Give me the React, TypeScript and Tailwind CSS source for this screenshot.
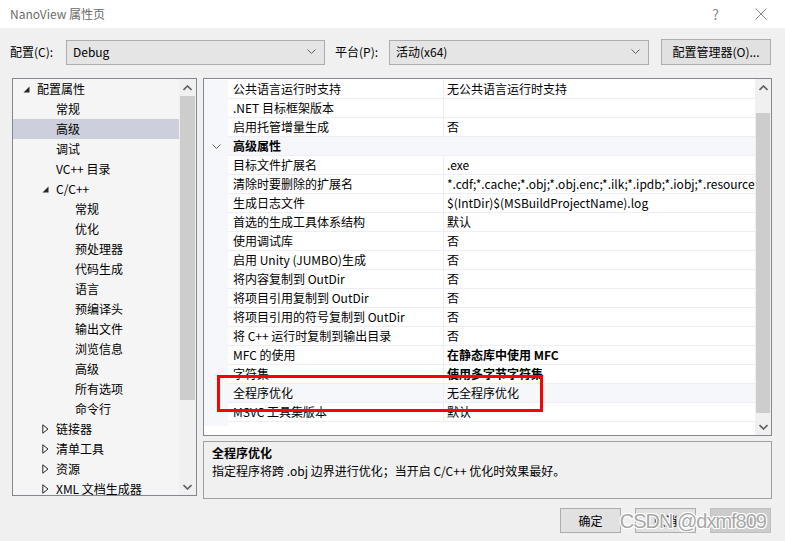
import React from 'react';

const FONT = { fontFamily: '"Noto Sans CJK SC", "Noto Sans", sans-serif' };

type TreeItem = { label: string; level: number; arrow?: 'open' | 'closed'; selected?: boolean };

const treeItems: TreeItem[] = [
  { label: '配置属性', level: 0, arrow: 'open' },
  { label: '常规', level: 1 },
  { label: '高级', level: 1, selected: true },
  { label: '调试', level: 1 },
  { label: 'VC++ 目录', level: 1 },
  { label: 'C/C++', level: 1, arrow: 'open' },
  { label: '常规', level: 2 },
  { label: '优化', level: 2 },
  { label: '预处理器', level: 2 },
  { label: '代码生成', level: 2 },
  { label: '语言', level: 2 },
  { label: '预编译头', level: 2 },
  { label: '输出文件', level: 2 },
  { label: '浏览信息', level: 2 },
  { label: '高级', level: 2 },
  { label: '所有选项', level: 2 },
  { label: '命令行', level: 2 },
  { label: '链接器', level: 1, arrow: 'closed' },
  { label: '清单工具', level: 1, arrow: 'closed' },
  { label: '资源', level: 1, arrow: 'closed' },
  { label: 'XML 文档生成器', level: 1, arrow: 'closed' },
];

type Row = { name: string; value?: string; category?: boolean; bold?: boolean; selected?: boolean };

const rows: Row[] = [
  { name: '公共语言运行时支持', value: '无公共语言运行时支持' },
  { name: '.NET 目标框架版本', value: '' },
  { name: '启用托管增量生成', value: '否' },
  { name: '高级属性', category: true },
  { name: '目标文件扩展名', value: '.exe' },
  { name: '清除时要删除的扩展名', value: '*.cdf;*.cache;*.obj;*.obj.enc;*.ilk;*.ipdb;*.iobj;*.resources;*.tlb;*.tli' },
  { name: '生成日志文件', value: '$(IntDir)$(MSBuildProjectName).log' },
  { name: '首选的生成工具体系结构', value: '默认' },
  { name: '使用调试库', value: '否' },
  { name: '启用 Unity (JUMBO)生成', value: '否' },
  { name: '将内容复制到 OutDir', value: '否' },
  { name: '将项目引用复制到 OutDir', value: '否' },
  { name: '将项目引用的符号复制到 OutDir', value: '否' },
  { name: '将 C++ 运行时复制到输出目录', value: '否' },
  { name: 'MFC 的使用', value: '在静态库中使用 MFC', bold: true },
  { name: '字符集', value: '使用多字节字符集', bold: true },
  { name: '全程序优化', value: '无全程序优化', selected: true },
  { name: 'MSVC 工具集版本', value: '默认' },
];

function Chevron({ className }: { className?: string }) {
  return (
    <svg width="9" height="6" viewBox="0 0 9 6" className={className}>
      <path d="M0.5 0.5 L4.5 4.5 L8.5 0.5" fill="none" stroke="#606060" strokeWidth="1" />
    </svg>
  );
}

function ScrollArrow({ up }: { up?: boolean }) {
  return (
    <svg width="9" height="6" viewBox="0 0 9 6">
      <path
        d={up ? 'M0.5 5 L4.5 1 L8.5 5' : 'M0.5 1 L4.5 5 L8.5 1'}
        fill="none"
        stroke="#606060"
        strokeWidth="1.6"
      />
    </svg>
  );
}

function Dropdown({ value, width }: { value: string; width: string }) {
  return (
    <div className={`${width} h-[25px] flex items-center justify-between pl-[6px] pr-[8px] bg-[#e5e5e5] border border-[#adadad]`}>
      <span className="text-[12px] text-black">{value}</span>
      <Chevron />
    </div>
  );
}

function TreeArrow({ kind }: { kind: 'open' | 'closed' }) {
  if (kind === 'open') {
    return (
      <svg width="7" height="7" viewBox="0 0 7 7">
        <path d="M6.5 0.5 L6.5 6.5 L0.5 6.5 Z" fill="#262626" />
      </svg>
    );
  }
  return (
    <svg width="7" height="10" viewBox="0 0 7 10">
      <path d="M0.8 0.8 L6 5 L0.8 9.2 Z" fill="none" stroke="#262626" strokeWidth="1" />
    </svg>
  );
}

export default function App() {
  return (
    <div className="relative w-[785px] h-[541px] bg-[#f0f0f0] flex flex-col overflow-hidden text-black" style={FONT}>
      {/* title bar */}
      <div className="h-[28px] bg-white flex items-center justify-between pl-[10px] pr-[18px] shrink-0">
        <span className="text-[12px] text-[#6b6b6b]">NanoView 属性页</span>
        <div className="flex items-center gap-[36px] text-[#8a8a8a]">
          <span className="text-[14px]">?</span>
          <svg width="12" height="12" viewBox="0 0 12 12">
            <path d="M0.5 0.5 L11.5 11.5 M11.5 0.5 L0.5 11.5" stroke="#8a8a8a" strokeWidth="1" />
          </svg>
        </div>
      </div>

      {/* config row */}
      <div className="mt-[11px] h-[26px] flex items-center pl-[10px] shrink-0">
        <span className="text-[12px] w-[56px]">配置(C):</span>
        <Dropdown value="Debug" width="w-[259px]" />
        <span className="text-[12px] ml-[10px] w-[54px]">平台(P):</span>
        <Dropdown value="活动(x64)" width="w-[260px]" />
        <div className="ml-[12px] w-[110px] h-[26px] flex items-center justify-center bg-[#e1e1e1] border border-[#adadad] text-[12px]">
          配置管理器(O)...
        </div>
      </div>

      {/* main */}
      <div className="mt-[13px] flex pl-[12px] shrink-0">
        {/* tree */}
        <div className="w-[185px] h-[418px] border border-[#828790] bg-[#f5f5f5] flex">
          <div className="flex-1 flex flex-col">
            {treeItems.map((t, i) => (
              <div
                key={i}
                className={`h-[20px] flex items-center shrink-0 text-[12px] ${t.selected ? 'bg-[#cdd0dc]' : ''}`}
              >
                <div
                  className={`flex items-center justify-end pr-[7px] shrink-0 ${
                    t.level === 0 ? 'w-[24px]' : t.level === 1 ? 'w-[43px]' : 'w-[62px]'
                  }`}
                >
                  {t.arrow && <TreeArrow kind={t.arrow} />}
                </div>
                <span className="whitespace-nowrap">{t.label}</span>
              </div>
            ))}
          </div>
          <div className="w-[17px] flex flex-col bg-[#f0f0f0]">
            <div className="h-[17px] flex items-center justify-center">
              <ScrollArrow up />
            </div>
            <div className="h-[304px] mx-[1px] bg-[#cdcdcd]" />
            <div className="flex-1" />
            <div className="h-[17px] flex items-center justify-center">
              <ScrollArrow />
            </div>
          </div>
        </div>

        {/* right side */}
        <div className="ml-[6px] w-[569px] flex flex-col">
          <div className="relative h-[358px] border border-[#828790] bg-white flex">
            <div className="flex-1 min-w-0 flex flex-col pt-[1px]">
              {rows.map((r, i) => (
                <div key={i} className="h-[19px] flex shrink-0 text-[12px]">
                  <div className="w-[24px] bg-[#f5f7fa] flex items-center justify-center shrink-0">
                    {r.category && <Chevron />}
                  </div>
                  {r.category ? (
                    <div className="flex-1 flex items-center pl-[5px] bg-[#f5f7fa] border-b border-[#f0f0f0] font-bold">
                      {r.name}
                    </div>
                  ) : (
                    <>
                      <div
                        className={`w-[216px] shrink-0 flex items-center pl-[5px] border-b border-r border-[#eceff3] whitespace-nowrap ${
                          r.selected ? 'bg-[#f5f7fa]' : ''
                        }`}
                      >
                        {r.name}
                      </div>
                      <div
                        className={`flex-1 min-w-0 overflow-hidden flex items-center pl-[3px] border-b border-[#eceff3] whitespace-nowrap ${
                          r.bold ? 'font-bold' : ''
                        } ${r.selected ? 'bg-[#f5f7fa]' : ''}`}
                      >
                        {r.value}
                      </div>
                    </>
                  )}
                </div>
              ))}
              <div className="flex-1 flex">
                <div className="w-[24px] h-[4px] bg-[#f5f7fa]" />
              </div>
            </div>
            <div className="w-[16px] flex flex-col bg-[#f0f0f0]">
              <div className="h-[17px] flex items-center justify-center">
                <ScrollArrow up />
              </div>
              <div className="h-[300px] mx-[1px] mt-[17px] bg-[#cdcdcd]" />
              <div className="flex-1" />
              <div className="h-[17px] flex items-center justify-center">
                <ScrollArrow />
              </div>
            </div>
            {/* red annotation box */}
            <div className="absolute left-[13px] top-[296px] w-[326px] h-[37px] border-[3px] border-[#ff0000]" />
          </div>
          <div className="mt-[5px] h-[58px] border border-[#a0a0a0] px-[8px] pt-[2px] text-[12px] leading-[18px]">
            <div className="font-bold">全程序优化</div>
            <div>指定程序将跨 .obj 边界进行优化；当开启 C/C++ 优化时效果最好。</div>
          </div>
        </div>
      </div>

      {/* buttons */}
      <div className="relative mt-[9px] flex justify-end gap-[14px] pr-[14px]">
        <div className="w-[61px] h-[25px] flex items-center justify-center bg-[#e1e1e1] border border-[#adadad] text-[12px]">确定</div>
        <div className="w-[61px] h-[25px] flex items-center justify-center bg-[#e1e1e1] border border-[#adadad] text-[12px]">取消</div>
        <div className="w-[61px] h-[25px] flex items-center justify-center bg-[#cccccc] border border-[#bfbfbf] text-[12px] text-[#8a8a8a]">应用</div>
        <div
          className="absolute right-[19px] top-[1px] text-[20px] leading-[24px] tracking-[-1px] text-[#a8a8a8] whitespace-nowrap"
          style={{ fontFamily: '"Liberation Sans", sans-serif', textShadow: '1px 1px 0 #fff, -1px -1px 0 #fff, 1px -1px 0 #fff, -1px 1px 0 #fff' }}
        >
          CSDN @dxmf809
        </div>
      </div>
    </div>
  );
}
